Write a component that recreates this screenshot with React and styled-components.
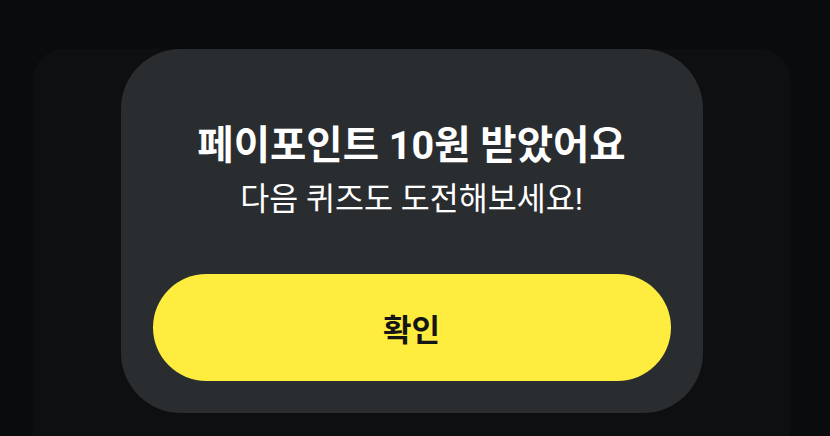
import styled, { createGlobalStyle } from "styled-components";

const GlobalStyle = createGlobalStyle`
    html, body {
        margin: 0;
        padding: 0;
        background-color: #0a0b0d;
        font-family: Roboto, "Noto Sans CJK KR", sans-serif;
    }
`;

const Screen = styled.div`
    width: 830px;
    height: 436px;
    overflow: hidden;
    padding-top: 49px;
    box-sizing: border-box;
`;

const Backdrop = styled.div`
    margin-left: 33px;
    width: 757px;
    height: 420px;
    border-radius: 30px;
    background-color: #0e0f11;
    display: flex;
    justify-content: center;
`;

const Modal = styled.section`
    width: 582px;
    height: 364px;
    box-sizing: border-box;
    padding: 73px 32px 32px;
    border-radius: 60px;
    background-color: #2a2d30;
    display: flex;
    flex-direction: column;
    align-items: center;
`;

const Title = styled.h2`
    margin: 0;
    font-size: 39.5px;
    line-height: 48px;
    font-weight: 700;
    color: #ffffff;
`;

const Subtitle = styled.p`
    margin: 10px 0 0;
    font-size: 31.5px;
    line-height: 40px;
    font-weight: 400;
    color: #ffffff;
`;

const ConfirmButton = styled.button`
    margin-top: auto;
    width: 100%;
    height: 107px;
    border: none;
    border-radius: 54px;
    background-color: #feec3f;
    color: #151515;
    font-family: inherit;
    font-size: 31px;
    font-weight: 700;
    cursor: pointer;
`;

const App = () => {
    return (
        <>
            <GlobalStyle />
            <Screen>
                <Backdrop>
                    <Modal>
                        <Title>페이포인트 10원 받았어요</Title>
                        <Subtitle>다음 퀴즈도 도전해보세요!</Subtitle>
                        <ConfirmButton>확인</ConfirmButton>
                    </Modal>
                </Backdrop>
            </Screen>
        </>
    );
}

export default App;
